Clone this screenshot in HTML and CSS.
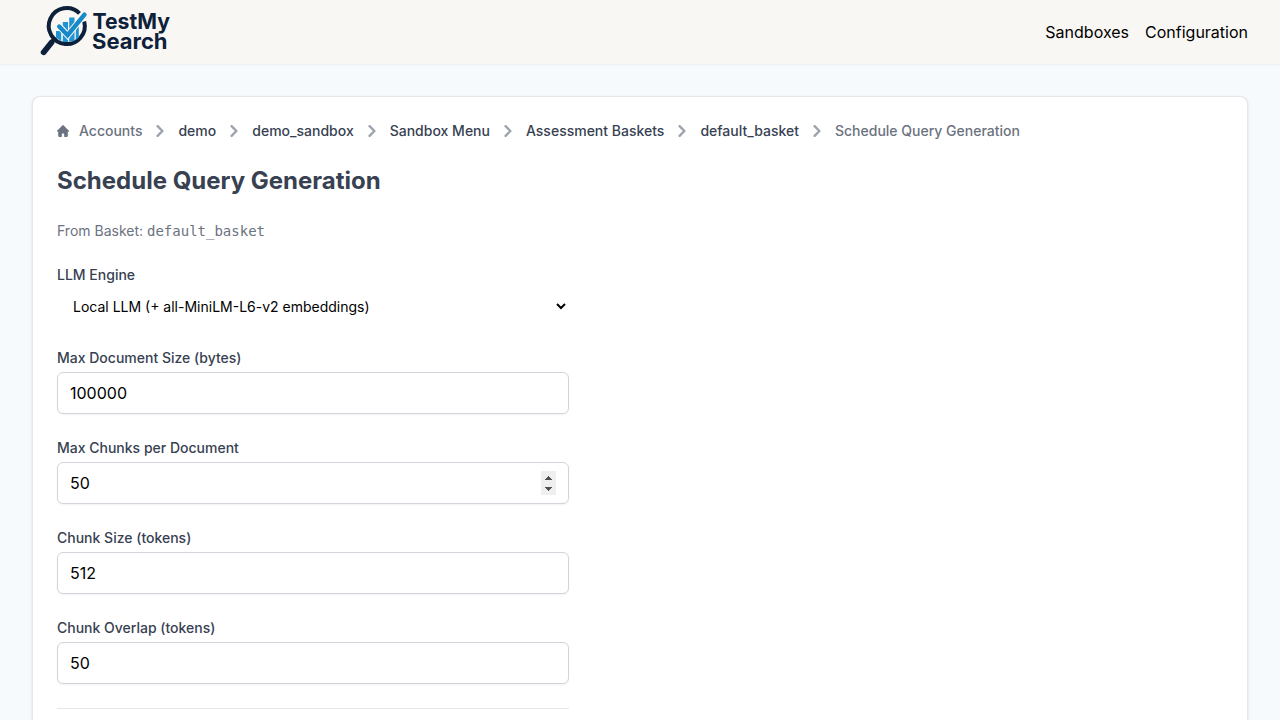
FILE: index.html
```html
<!DOCTYPE html>
<html lang="en">
<head>
<meta charset="utf-8">
<title>Schedule Query Generation</title>
<link rel="stylesheet" href="styles.css">
</head>
<body>
<svg class="defs" aria-hidden="true">
  <symbol id="chevron" viewBox="0 0 6 10"><path d="m1 9 4-4-4-4" fill="none" stroke="currentColor" stroke-width="2" stroke-linecap="round" stroke-linejoin="round"/></symbol>
</svg>
<header class="topbar">
  <a class="brand" aria-label="TestMy Search">
    <svg class="logo" viewBox="32 0 148 64">
      <path d="M51.500 42.500 43.700 52.200" stroke="#0e213b" stroke-width="5.800" stroke-linecap="round"/>
      <path d="M51 42.500 56 38" stroke="#0e213b" stroke-width="4"/>
      <path d="M79.500 13.300A18 18 0 1 0 84.200 21.500" fill="none" stroke="#0e213b" stroke-width="4"/>
      <path d="M56 31h5.200v10.200L56 37.500zM62.800 22H68v20h-5.200zM69.200 17.500h5.300V41l-5.300.8zM75.800 26h3V37.500l-3 2.500z" fill="#2094d2"/>
      <path d="M57 24 67.600 35.200 86 13" fill="none" stroke="#f9f7f3" stroke-width="6.400"/>
      <path d="M59.200 26.500 67.600 35.200 84.500 14.700" fill="none" stroke="#1689c8" stroke-width="4.400" stroke-linecap="round"/>
      <text class="logo-text" x="92.500" y="29" textLength="77.500" lengthAdjust="spacingAndGlyphs">TestMy</text>
      <text class="logo-text" x="92" y="49.300" textLength="75.500" lengthAdjust="spacingAndGlyphs">Search</text>
    </svg>
  </a>
  <nav class="nav"><a>Sandboxes</a><a>Configuration</a></nav>
</header>
<main class="page">
  <section class="card">
    <ol class="crumbs">
      <li class="muted"><svg class="home" viewBox="0 0 20 20"><path fill="currentColor" d="m19.707 9.293-2-2-7-7a1 1 0 0 0-1.414 0l-7 7-2 2a1 1 0 0 0 1.414 1.414L2 10.414V18a2 2 0 0 0 2 2h3a1 1 0 0 0 1-1v-4a1 1 0 0 1 1-1h2a1 1 0 0 1 1 1v4a1 1 0 0 0 1 1h3a2 2 0 0 0 2-2v-7.586l.293.293a1 1 0 0 0 1.414-1.414Z"/></svg>Accounts</li>
      <li><svg class="chevron"><use href="#chevron"/></svg><a>demo</a></li>
      <li><svg class="chevron"><use href="#chevron"/></svg><a>demo_sandbox</a></li>
      <li><svg class="chevron"><use href="#chevron"/></svg><a>Sandbox Menu</a></li>
      <li><svg class="chevron"><use href="#chevron"/></svg><a>Assessment Baskets</a></li>
      <li><svg class="chevron"><use href="#chevron"/></svg><a>default_basket</a></li>
      <li class="muted"><svg class="chevron"><use href="#chevron"/></svg><span>Schedule Query Generation</span></li>
    </ol>
    <h1 class="title">Schedule Query Generation</h1>
    <p class="source">From Basket: <span class="mono">default_basket</span></p>
    <form class="form">
      <div class="field">
        <label class="label" for="engine">LLM Engine</label>
        <select class="select" id="engine"><option>Local LLM (+ all-MiniLM-L6-v2 embeddings)</option></select>
      </div>
      <div class="field">
        <label class="label" for="size">Max Document Size (bytes)</label>
        <input class="input" id="size" type="text" value="100000">
      </div>
      <div class="field">
        <label class="label" for="chunks">Max Chunks per Document</label>
        <div class="input stepper">
          <input class="stepper-value" id="chunks" type="text" value="50">
          <svg class="stepper-buttons" viewBox="0 0 15 24" shape-rendering="crispEdges"><path d="M0 0h15v24H0z" fill="#efefef"/><path d="M7 5h1v1h1v1h1v1h1v1H4V8h1V7h1V6h1zM4 16h7v1h-1v1H9v1H8v1H7v-1H6v-1H5v-1H4z" fill="#505050"/></svg>
        </div>
      </div>
      <div class="field">
        <label class="label" for="tokens">Chunk Size (tokens)</label>
        <input class="input" id="tokens" type="text" value="512">
      </div>
      <div class="field">
        <label class="label" for="overlap">Chunk Overlap (tokens)</label>
        <input class="input" id="overlap" type="text" value="50">
      </div>
      <div class="divider"></div>
    </form>
  </section>
</main>
</body>
</html>
```
FILE: styles.css
```css
*, *::before, *::after { box-sizing: border-box; }
body {
  display: flex;
  flex-direction: column;
  margin: 0;
  height: 720px;
  background: #f6fafd;
  color: #000;
  font: 16px/24px Inter, sans-serif;
}
.defs { display: none; }
.topbar {
  display: flex;
  flex: none;
  align-items: center;
  justify-content: space-between;
  height: 64px;
  padding: 0 32px;
  background: #f9f7f3;
  box-shadow: 0 1px 2px rgba(0, 0, 0, .05);
}
.logo { display: block; width: 148px; height: 64px; }
.logo-text { font: 700 22px Inter, sans-serif; fill: #0e213b; }
.nav { display: flex; gap: 16px; }
.page { display: flex; flex: 1; min-height: 0; padding: 32px 32px 0; }
.card {
  flex: 1;
  padding: 24px 24px 0;
  background: #fff;
  border: 1px solid #e5e7eb;
  border-bottom: 0;
  border-radius: 8px 8px 0 0;
  box-shadow: 0 1px 3px rgba(0, 0, 0, .1), 0 1px 2px -1px rgba(0, 0, 0, .1);
}
.crumbs {
  display: flex;
  gap: 8px;
  margin: 0 0 24px;
  padding: 0;
  list-style: none;
  color: #374151;
  font-size: 14px;
  line-height: 20px;
  font-weight: 500;
}
.crumbs li { display: flex; align-items: center; }
.crumbs .muted { color: #6b7280; }
.home { width: 12px; height: 12px; margin-right: 10px; }
.chevron { width: 12px; height: 12px; margin: 0 12px 0 4px; color: #9ca3af; }
.title {
  margin: 0 0 24px;
  color: #374151;
  font-size: 24px;
  line-height: 32px;
  font-weight: 700;
}
.source { margin: 0 0 24px; color: #6b7280; font-size: 14px; line-height: 20px; }
.mono { font-family: "DejaVu Sans Mono", monospace; }
.form { display: flex; flex-direction: column; gap: 24px; width: 512px; }
.field { display: flex; flex-direction: column; gap: 4px; }
.label { color: #374151; font-size: 14px; line-height: 20px; font-weight: 500; }
.select {
  width: 100%;
  height: 35px;
  padding: 8px 0 8px 12px;
  border: 0;
  background: #fff;
  color: #000;
  font: 14px Inter, sans-serif;
}
.input {
  width: 100%;
  height: 42px;
  padding: 8px 12px;
  border: 1px solid #d1d5db;
  border-radius: 6px;
  background: #fff;
  box-shadow: 0 1px 2px rgba(0, 0, 0, .05);
  color: #000;
  font: 16px/24px Inter, sans-serif;
}
.stepper { display: flex; align-items: center; }
.stepper-value {
  flex: 1;
  min-width: 0;
  height: 24px;
  padding: 0;
  border: 0;
  outline: 0;
  background: transparent;
  font: inherit;
}
.stepper-buttons { flex: none; width: 15px; height: 24px; }
.divider { border-top: 1px solid #e5e7eb; }
```
